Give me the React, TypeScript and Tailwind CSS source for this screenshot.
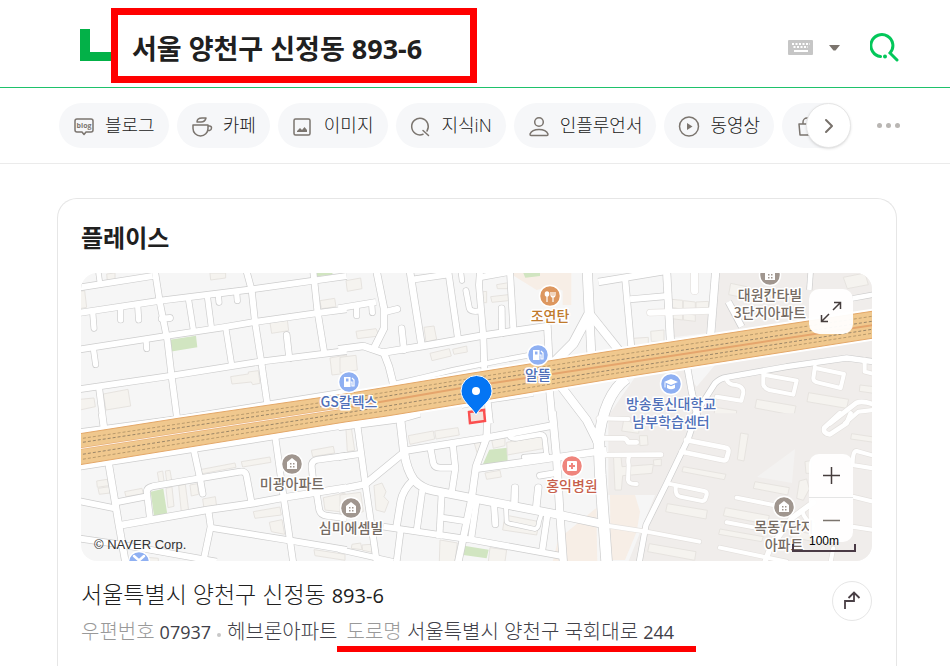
import React from 'react';
import { ChevronRight } from 'lucide-react';

type Road = [width: number, d: string];

interface Tile {
  x: number;
  y: number;
  roads: Road[];
  stubs: Road[];
  land?: string;
  buildings: string;
  parks?: string;
  food?: string;
}

interface Pin {
  x: number;
  y: number;
  kind: 'home' | 'gas' | 'food' | 'school' | 'hospital' | 'repair';
  lines: string[];
}

// Each tile is drawn at three units per map pixel.
const tiles: Tile[] = [
  {
    x: 80,
    y: 270,
    roads: [
      [18, 'M-5 53L218 18'],
      [18, 'M-5 129L240 92L500 60L700 32L800 18'],
      [18, 'M-5 239L245 200L430 172L530 155L720 128L800 118'],
      [18, 'M-5 358L270 318L540 275L800 243'],
      [18, 'M-5 487L300 446L800 366'],
      [18, 'M225 5L240 100L262 210L275 320L292 450'],
      [18, 'M500 5L515 60L525 155L543 270L562 402'],
      [18, 'M700 5L712 120L733 250'],
      [16, 'M325 85L341 185'],
      [16, 'M382 78L395 178'],
      [16, 'M437 172L455 285'],
      [14, 'M55 5L60 40'],
      [18, 'M57 352L72 470'],
    ],
    stubs: [
      [16, 'M38 125L42 175'],
      [16, 'M122 113V150'],
      [16, 'M173 105L176 150'],
      [18, 'M245 146L270 144'],
      [16, 'M415 75L417 97'],
      [16, 'M470 68L472 92'],
      [16, 'M40 235L47 284'],
      [16, 'M198 208L200 236'],
      [18, 'M620 195L628 265'],
    ],
    buildings:
      'M80 12L105 9V30L82 32ZM390 9H437V24L392 30ZM0 64L14 62L20 112L0 116ZM720 92L764 85L768 110L724 116ZM570 158L622 150L626 182L575 190ZM452 320L505 312V306L535 302L540 340L518 344L514 336L456 342ZM750 264L800 255V310L756 315ZM0 388L42 384L46 410L0 420ZM70 372L144 358L152 408L78 420Z',
    parks: 'M265 210L348 197L352 232L270 245ZM708 9H758L756 14L712 19Z',
  },
  {
    x: 340,
    y: 270,
    roads: [
      [18, 'M-5 115L108 96'],
      [20, 'M-5 238L70 228L128 248L250 228L420 198L625 168'],
      [18, 'M215 29L332 12'],
      [20, 'M110 5L132 115V175L102 235'],
      [20, 'M130 245L147 290L162 350'],
      [20, 'M210 5L245 228'],
      [18, 'M325 5L355 212'],
      [18, 'M420 5L417 45L430 200L433 300'],
      [18, 'M418 22L506 6'],
      [18, 'M510 5L521 190'],
      [14, 'M150 345L250 322L340 300L480 272L625 245'],
      [20, 'M622 165L628 280'],
      [28, 'M742 5L748 130L700 220L640 280'],
      [24, 'M748 130L755 270'],
      [24, 'M748 130L840 245'],
      [12, 'M365 408L440 393L580 372'],
      [18, 'M442 385L450 460'],
      [20, 'M628 355L637 450'],
      [24, 'M660 345L740 450L775 520'],
      [30, 'M860 325Q790 375 775 520'],
    ],
    stubs: [
      [16, 'M50 108V137'],
      [16, 'M95 102L97 128'],
      [18, 'M135 126L172 117'],
      [18, 'M185 175L192 240'],
      [18, 'M485 115L486 190'],
      [16, 'M378 62L388 115Q392 128 422 122'],
      [14, 'M363 8L366 32'],
    ],
    buildings:
      'M18 32L62 24L66 56L22 64ZM48 184L108 176L118 198L52 206ZM252 172L282 168L290 208L258 216ZM270 250L328 236L334 258L276 272ZM338 238L380 228L382 246L342 253ZM452 80L505 74V92L456 97ZM470 44L505 38V56H472ZM425 66L440 64V98H428ZM0 262L48 256L52 300L0 308Z',
    food: 'M508 9H694V105H668V62L635 48L590 60Z',
    parks: 'M550 9H600V18L556 23Z',
  },
  {
    x: 600,
    y: 270,
    land: 'M355 5H820V125L346 192ZM215 120L330 128L318 190L222 202ZM345 285L820 210V455H30V430L105 322L255 300L290 350Z',
    roads: [
      [20, 'M-5 36L190 4'],
      [18, 'M75 20L95 245'],
      [18, 'M90 88L202 78'],
      [22, 'M200 5L212 225'],
      [22, 'M347 5L332 195'],
      [18, 'M385 95L425 170'],
      [14, 'M632 5L628 60'],
      [14, 'M758 85L820 74'],
      [18, 'M262 292L275 365L295 450'],
      [16, 'M262 470L345 340Q360 325 380 322L560 290L740 264L820 275'],
    ],
    stubs: [
      [22, 'M284 -10V62'],
      [18, 'M150 128L330 122'],
      [12, 'M378 325Q385 345 408 345Q432 350 430 368L424 392L350 380'],
      [12, 'M490 305V345Q495 356 508 360L580 374L590 332L495 315'],
      [12, 'M645 290L640 325Q640 335 655 338L722 354L732 312L650 295'],
      [12, 'M794 270V305L822 312'],
      [14, 'M690 460L770 398Q790 392 820 403'],
      [12, 'M735 460L775 425L820 420'],
    ],
    buildings:
      'M214 88L248 91V118L214 112ZM250 92L286 96V120L250 118ZM288 96L326 94V118L288 120ZM214 126L248 130V150L214 146ZM250 130L286 135V154L250 150ZM100 205L145 202V222L102 227ZM152 184L192 180V214H154ZM392 40L440 50L436 84L386 74ZM470 388L588 408L582 436L465 414ZM626 368L746 388L740 415L621 395ZM780 345L822 350V370L778 364ZM730 22L795 9L805 44L742 56ZM345 412L410 422L408 450H340Z',
  },
  {
    x: 80,
    y: 415,
    roads: [
      [18, 'M-5 156L800 30'],
      [18, 'M65 -5L72 45'],
      [20, 'M85 140L115 320L137 445'],
      [18, 'M-5 258L105 280'],
      [18, 'M108 262L200 244'],
      [18, 'M210 310L201 235Q198 218 218 214L360 190L480 170Q495 168 499 180L515 265'],
      [18, 'M340 98L360 190'],
      [20, 'M115 332L380 285L520 265L610 248L800 218'],
      [18, 'M585 60L610 240L640 445'],
      [18, 'M385 285L392 335L370 440'],
      [18, 'M390 338L620 375L800 405'],
      [18, 'M704 240L695 155Q694 138 712 134L800 122'],
      [18, 'M710 235L718 285Q722 300 740 302L800 310'],
      [18, 'M-5 370L130 390L410 440'],
    ],
    stubs: [[18, 'M360 190L368 236']],
    buildings:
      'M50 198L82 193L86 212L52 217ZM54 220L88 215L90 234L58 238ZM232 172L248 168L252 198L237 201ZM256 168L270 166L275 195L260 198ZM134 230L186 220L190 236L138 245ZM258 220L276 216L282 274L264 278ZM296 212L316 208L326 286L304 291ZM330 210L352 206L356 238L334 243ZM355 165L465 144L468 157L358 178ZM484 140L570 126L573 142L488 156ZM368 252L406 245L410 274L372 280ZM694 106L760 94L764 114L698 125ZM520 290L600 276L604 300L525 310ZM568 322L606 314L614 358L574 350ZM730 248L795 234V292L735 285ZM702 404L795 418V436L705 422ZM175 425L235 430V440H170Z',
    parks: 'M212 230L250 221L262 298L222 302Z',
  },
  {
    x: 340,
    y: 415,
    roads: [
      [20, 'M-5 36L180 12L240 -5'],
      [18, 'M52 30L75 200L110 440'],
      [18, 'M-5 126L65 116'],
      [20, 'M-5 224L75 208L192 112'],
      [24, 'M180 5L192 110Q200 165 222 195Q245 220 280 227L400 250L660 300L780 325'],
      [20, 'M190 108L430 70L645 30'],
      [20, 'M443 -10L440 68L408 155L395 250L355 440'],
      [20, 'M405 162L645 128L800 106'],
      [22, 'M637 -10L650 130L660 300L670 440'],
      [18, 'M270 92L280 145Q284 158 300 158L345 158'],
      [18, 'M338 85L346 160L334 240'],
      [20, 'M220 195Q188 225 182 260L168 345'],
      [18, 'M247 225L230 348'],
      [18, 'M305 235L298 370'],
      [18, 'M305 308L372 318'],
      [18, 'M410 255L393 375'],
      [18, 'M130 335L400 375L675 425'],
      [18, 'M622 300L605 418'],
      [18, 'M182 345L170 440'],
      [16, 'M-5 403L160 440'],
      [32, 'M775 40L781 180L800 440'],
    ],
    stubs: [
      [14, 'M510 65Q515 72 530 70L600 58Q612 58 614 70L620 125'],
      [14, 'M552 126L620 120'],
      [18, 'M600 182L648 174'],
      [20, 'M525 218L523 275'],
      [20, 'M595 218L588 285'],
      [18, 'M462 268L466 328'],
      [12, 'M498 278L500 320Q502 325 520 328L585 342Q596 340 597 320L605 295'],
    ],
    buildings:
      'M205 62L280 48L284 72L210 88ZM284 48L354 38L358 60L288 72ZM18 42L34 38L44 106L22 110ZM455 74L495 68V92L460 100ZM500 82L606 65L614 100L502 120ZM435 174L480 166L484 186L440 193ZM102 212L126 204L138 230L132 245L146 260L134 292L108 285ZM495 300L598 320L590 360L488 345ZM36 388L62 384L66 404L34 400ZM66 390L94 388L98 412L68 406ZM300 375L352 384L345 440H298ZM0 240L62 232L70 290L0 305ZM450 398L500 405L495 440H445ZM402 82L425 78L415 125Z',
    parks: 'M448 104L502 98L503 145L425 156ZM372 392L446 404L440 430L370 420Z',
    food: 'M770 278V340L772 440H638L655 372L700 335Z',
  },
  {
    x: 600,
    y: 415,
    land: 'M25 -5H820V440H85L165 240H25Z',
    roads: [[16, 'M285 10L265 70L200 205L138 330L118 440']],
    stubs: [
      [12, 'M-5 10L85 12'],
      [14, 'M0 70H70Q80 70 84 82H110'],
      [14, 'M10 120L183 119'],
      [12, 'M90 120Q82 130 86 150L84 195Q86 208 110 207'],
      [14, 'M258 75L375 98Q388 100 385 112L380 130Q378 138 365 135L245 110'],
      [12, 'M205 206L312 228Q322 230 320 240L316 252Q312 260 300 257L240 245Q225 242 227 215'],
      [12, 'M22 332L140 350L298 380'],
      [12, 'M410 248L520 270'],
      [12, 'M380 322L465 338'],
      [12, 'M360 398L560 440'],
      [16, 'M495 440L510 400L575 310L640 262'],
      [14, 'M752 -5L740 25L690 58Q668 56 673 38L720 -5'],
      [12, 'M820 122L770 108Q758 106 758 150L820 160'],
      [12, 'M608 292Q615 315 640 330'],
      [12, 'M758 245L820 260'],
      [12, 'M700 400L692 440'],
      [12, 'M758 335L820 345'],
    ],
    buildings:
      'M422 54L445 58L432 138L412 134ZM250 155L378 178L373 194L246 170ZM465 200L568 218L563 240L460 220ZM202 266L322 286L318 312L197 290ZM376 278L508 302L502 328L370 302ZM360 342L490 365L485 380L356 358ZM148 386L288 410L284 436L143 410ZM40 115H62L66 155L160 148L156 175L68 182L64 225H45ZM118 62H142L144 90L120 92ZM72 10L118 35L116 55L65 48ZM755 56L822 66V82L752 72ZM598 198L620 192L628 222L610 256L590 250ZM160 135L184 132V152H162ZM575 345L640 358V380L570 365ZM615 140L635 136V175H618Z',
    food: 'M30 240L105 240L120 290L110 350L75 435H32Z',
  },
];

const pins: Pin[] = [
  { x: 550, y: 296, kind: 'food', lines: ['조연탄'] },
  { x: 538, y: 355, kind: 'gas', lines: ['알뜰'] },
  { x: 349, y: 382, kind: 'gas', lines: ['GS칼텍스'] },
  { x: 770, y: 275, kind: 'home', lines: ['대원칸타빌', '3단지아파트'] },
  { x: 671, y: 384, kind: 'school', lines: ['방송통신대학교', '남부학습센터'] },
  { x: 292, y: 464, kind: 'home', lines: ['미광아파트'] },
  { x: 351, y: 508, kind: 'home', lines: ['심미에셈빌'] },
  { x: 572, y: 466, kind: 'hospital', lines: ['홍익병원'] },
  { x: 784, y: 507, kind: 'home', lines: ['목동7단지', '아파트'] },
  { x: 139, y: 562, kind: 'repair', lines: [] },
];

const pinColors = {
  home: { fill: '#a0968f', text: '#756b63' },
  gas: { fill: '#8fb0f2', text: '#4f70b8' },
  food: { fill: '#dd975f', text: '#c07a2c' },
  school: { fill: '#8fb0f2', text: '#4f70b8' },
  hospital: { fill: '#ef857d', text: '#c75f4c' },
  repair: { fill: '#8fb0f2', text: '#4f70b8' },
};

const PinGlyph = ({ kind }: { kind: Pin['kind'] }) => {
  switch (kind) {
    case 'home':
      return (
        <>
          <path d="M-5 -2L0 -6L5 -2V5H-5Z" fill="#fff" />
          <path d="M-2 -1h1.500v1.500H-2zM1 -1h1.500v1.500H1zM-2 2h1.500v1.500H-2zM1 2h1.500v1.500H1z" fill="#a0968f" />
        </>
      );
    case 'gas':
      return (
        <>
          <path d="M-5 -5H1.500V5H-5Z" fill="#fff" />
          <path d="M-3 -3.500H-0.500V-0.500H-3Z" fill="#8fb0f2" />
          <path d="M1.500 0H3V4H5V-2L3 -4" fill="none" stroke="#fff" strokeWidth="1.200" />
        </>
      );
    case 'food':
      return (
        <>
          <ellipse cx="-3" cy="-2" rx="2.300" ry="2.700" fill="#fff" />
          <path d="M-3 0V6M3 0V6M1 -4V-1Q1 1 3 1Q5 1 5 -1V-4M3 -4V1" fill="none" stroke="#fff" strokeWidth="1.200" />
        </>
      );
    case 'school':
      return (
        <path d="M-7 -2L0 -5L7 -2L0 1ZM-4 0.500L0 2.300L4 0.500V4Q0 6.500 -4 4ZM-6.500 -1.500V3.500H-5.500V-1Z" fill="#fff" />
      );
    case 'hospital':
      return (
        <>
          <rect x="-5" y="-5" width="10" height="10" rx="1" fill="#fff" />
          <path d="M-3 0H3M0 -3V3" stroke="#ef857d" strokeWidth="2" />
        </>
      );
    case 'repair':
      return <path d="M-5 -6L5 3M5 -6L-5 3" stroke="#fff" strokeWidth="2.500" strokeLinecap="round" />;
  }
};

const HIGHWAY =
  'M78 434L180 418L345 394L473 373L605 352L874 311V338L605 380L473 402L387 416L345 422L78 465Z';

const StreetMap = () => (
  <svg
    className="block h-full w-full font-['Noto_Sans_CJK_KR',sans-serif]"
    viewBox="81 273 791 288"
    preserveAspectRatio="xMidYMid slice"
    role="img"
    aria-label="지도"
  >
    <rect x="0" y="200" width="1000" height="450" fill="#f6f6f6" />
    {tiles.map((t) => (
      <g key={`land-${t.x}-${t.y}`} transform={`translate(${t.x} ${t.y}) scale(0.3333)`}>
        {t.land && <path d={t.land} fill="#f0edeb" />}
        {t.food && <path d={t.food} fill="#f7eee6" />}
        {t.parks && <path d={t.parks} fill="#d1e5c1" />}
        <path d={t.buildings} fill="#f5f3ef" stroke="#e6e3df" strokeWidth="3" />
      </g>
    ))}
    <path d="M795 449L792 483L757 477Z" fill="#f3f2f1" />
    {tiles.map((t) => (
      <g key={`case-${t.x}-${t.y}`} transform={`translate(${t.x} ${t.y}) scale(0.3333)`} fill="none" stroke="#cdcdcd" strokeLinejoin="round">
        {t.roads.map(([w, d]) => (
          <path key={d} d={d} strokeWidth={w + 4} />
        ))}
        {t.stubs.map(([w, d]) => (
          <path key={d} d={d} strokeWidth={w + 4} strokeLinecap="round" stroke={t.x === 600 ? '#e4e1de' : '#cdcdcd'} />
        ))}
      </g>
    ))}
    <path d={HIGHWAY} fill="#fff" stroke="#fff" strokeWidth="5" />
    {tiles.map((t) => (
      <g key={`road-${t.x}-${t.y}`} transform={`translate(${t.x} ${t.y}) scale(0.3333)`} fill="none" stroke="#fff" strokeLinejoin="round">
        {t.roads.map(([w, d]) => (
          <path key={d} d={d} strokeWidth={w} />
        ))}
        {t.stubs.map(([w, d]) => (
          <path key={d} d={d} strokeWidth={w} strokeLinecap="round" />
        ))}
      </g>
    ))}

    <path d={HIGHWAY} fill="#f0c88e" stroke="#e3a768" strokeWidth="1" />
    <g fill="none" stroke="#b99a6c" strokeWidth="1" strokeDasharray="3 2">
      <path d="M78 439L345 399L473 378L605 357L874 316" />
      <path d="M78 443L345 403L473 382L605 362L874 321" stroke="#9a8567" />
      <path d="M78 455L345 413L473 392L605 371L874 329" stroke="#9a8567" />
      <path d="M78 460L345 417L473 397L605 375L874 333" />
    </g>
    <path d="M78 449L345 408L473 386L605 366L874 325" fill="none" stroke="#e5a56c" strokeWidth="2" />
    <path d="M78 449L345 408" fill="none" stroke="#fdf3e6" strokeWidth="1" />

    <path d="M469 412L484 410L485 421L470 423Z" fill="#f3e3dd" stroke="#fb4f4f" strokeWidth="2.500" />
    {pins.map((pin) => (
      <g key={`${pin.x}-${pin.y}`}>
        <g transform={`translate(${pin.x} ${pin.y})`}>
          <circle r="10.500" fill={pinColors[pin.kind].fill} stroke="#fff" strokeWidth="1.500" />
          <PinGlyph kind={pin.kind} />
        </g>
        <text
          textAnchor="middle"
          fontSize="14"
          fontWeight="500"
          fill={pinColors[pin.kind].text}
          stroke="#fff"
          strokeWidth="3"
          strokeLinejoin="round"
          paintOrder="stroke"
        >
          {pin.lines.map((line, i) => (
            <tspan key={line} x={pin.x} y={pin.y + 25 + i * 18}>
              {line}
            </tspan>
          ))}
        </text>
      </g>
    ))}
    <path d="M476 415C472 407 461 401 461 391A15.500 15.500 0 0 1 492 391C492 401 480 407 476 415Z" fill="#0475f4" stroke="#fff" strokeWidth="1" />
    <circle cx="476" cy="391" r="4" fill="#fff" />
  </svg>
);

const iconProps = {
  width: 22,
  height: 22,
  viewBox: '0 0 22 22',
  fill: 'none',
  stroke: '#7b756f',
  strokeWidth: 1.5,
  strokeLinecap: 'round',
  strokeLinejoin: 'round',
  'aria-hidden': true,
} as const;

const tabs = [
  {
    label: '블로그',
    icon: (
      <svg {...iconProps}>
        <path d="M4 4H18Q20 4 20 6V15Q20 17 18 17H13L11 19.500L9 17H4Q2 17 2 15V6Q2 4 4 4Z" />
        <text x="11" y="13" textAnchor="middle" fontSize="7" fontWeight="700" fill="#7b756f" stroke="none">blog</text>
      </svg>
    ),
  },
  {
    label: '카페',
    icon: (
      <svg {...iconProps}>
        <path d="M2 10H17V13.500A7 7 0 0 1 2 13.500ZM17 11H18.500Q20.500 11 20.500 13T18.500 15.500H16.500M6 7Q6 3 11 3H15Q14 7 10 7Z" />
      </svg>
    ),
  },
  {
    label: '이미지',
    icon: (
      <svg {...iconProps}>
        <rect x="2" y="4" width="16" height="16" rx="1.500" />
        <path d="M5 17V16L8 13L10 15L12.500 12L15 15V17Z" fill="#7b756f" stroke="none" />
      </svg>
    ),
  },
  {
    label: '지식iN',
    icon: (
      <svg {...iconProps}>
        <path d="M13 19.300A8.300 8.300 0 1 1 17 16M13 15.500L18.500 20.500" />
      </svg>
    ),
  },
  {
    label: '인플루언서',
    icon: (
      <svg {...iconProps}>
        <circle cx="11" cy="7" r="4.300" />
        <path d="M3 20.500Q2 20.500 2 19Q4 14.500 11 14.500T20 19Q20 20.500 19 20.500Z" />
      </svg>
    ),
  },
  {
    label: '동영상',
    icon: (
      <svg {...iconProps}>
        <circle cx="11" cy="11.500" r="9.500" />
        <path d="M9 8V15L14.500 11.500Z" fill="#7b756f" stroke="none" />
      </svg>
    ),
  },
];

const Header = () => (
  <header className="flex h-22 shrink-0 items-center border-b border-[#1ec26b] pr-[51px] pl-20">
    <a href="#" aria-label="NAVER" className="mt-[3px] shrink-0">
      <svg width="31" height="32" viewBox="0 0 31 32" className="block" aria-hidden="true">
        <path d="M0 0H10V23H31V32H0Z" fill="#03b148" />
      </svg>
    </a>
    <form className="flex min-w-0 flex-1 items-center justify-between" onSubmit={(e) => e.preventDefault()}>
      <input
        type="text"
        aria-label="검색어"
        defaultValue="서울 양천구 신정동 893-6"
        className="mt-1 h-[75px] w-[366px] border-[7px] border-[#ff0000] bg-white px-[14px] pt-[3px] text-[27px] font-bold text-[#202020] outline-none"
      />
      <div className="mt-[8px] flex items-center">
        <button type="button" aria-label="한글 입력기" className="mr-4">
          <svg width="25" height="15" viewBox="0 0 25 15" className="block">
            <rect width="25" height="15" rx="1" fill="#c6c6c6" />
            <path d="M4 4H22M5.500 7H20" stroke="#fff" strokeWidth="2" strokeDasharray="2 1.500" />
            <path d="M6 11H20" stroke="#fff" strokeWidth="2" />
          </svg>
        </button>
        <button type="button" aria-label="자동완성 펼치기" className="mr-[30px]">
          <svg width="11" height="6" viewBox="0 0 11 6" className="block">
            <path d="M0 0H11L6.500 5.500H4.500Z" fill="#7b746d" />
          </svg>
        </button>
        <button type="submit" aria-label="검색">
          <svg width="29" height="30" viewBox="0 0 29 30" className="block" fill="none" stroke="#03c75a" strokeWidth="3" strokeLinecap="round">
            <path d="M10.500 23.500A11 11 0 1 1 20 20L27 27" />
            <circle cx="15" cy="23.500" r="2" fill="#03c75a" stroke="none" />
          </svg>
        </button>
      </div>
    </form>
  </header>
);

const TabBar = () => (
  <nav className="flex h-19 shrink-0 items-center border-b border-[#ebebeb] pr-[50px] pl-[59px]">
    <div className="relative min-w-0 max-w-[792px] flex-1">
      <ul className="mr-[22px] flex gap-2 overflow-hidden">
        {tabs.map((tab) => (
          <li key={tab.label} className="shrink-0">
            <a
              href="#"
              className="flex h-[45px] items-center gap-[10px] rounded-full bg-[#f6f7f9] px-[14px] text-[18px] font-light text-[#202020]"
            >
              {tab.icon}
              {tab.label}
            </a>
          </li>
        ))}
        <li className="shrink-0">
          <a href="#" aria-label="쇼핑" className="flex h-[45px] w-24 items-center rounded-full bg-[#f6f7f9] px-[14px]">
            <svg {...iconProps}>
              <path d="M3 9H19L18 20H4ZM7 9V7A4 4 0 0 1 15 7V9" />
            </svg>
          </a>
        </li>
      </ul>
      <button
        type="button"
        aria-label="다음"
        className="absolute top-0 right-0 flex h-[45px] w-[45px] items-center justify-center rounded-full border border-[#e6e6e6] bg-white text-[#77716b] shadow-sm"
      >
        <ChevronRight size={24} strokeWidth={2} />
      </button>
    </div>
    <button type="button" aria-label="더보기" className="ml-[26px] flex gap-1">
      <span className="h-[5px] w-[5px] rounded-full bg-[#b9b6b3]" />
      <span className="h-[5px] w-[5px] rounded-full bg-[#b9b6b3]" />
      <span className="h-[5px] w-[5px] rounded-full bg-[#b9b6b3]" />
    </button>
  </nav>
);

const PlaceMap = () => (
  <div className="relative h-72 overflow-hidden rounded-[16px]">
    <StreetMap />
    <button
      type="button"
      aria-label="지도 크게 보기"
      className="absolute top-4 right-[19px] flex h-[45px] w-[44px] items-center justify-center rounded-[10px] bg-white/95"
    >
      <svg width="22" height="22" viewBox="0 0 22 22" fill="none" stroke="#453d3d" strokeWidth="1.500">
        <path d="M13 9L20.500 1.500M14 1.500H20.500V8M9 13L1.500 20.500M1.500 14V20.500H8" />
      </svg>
    </button>
    <div className="absolute right-[19px] bottom-[19px] w-[44px] overflow-hidden rounded-[10px] bg-white/95">
      <button type="button" aria-label="확대" className="flex h-[44px] w-full items-center justify-center border-b border-[#e5e5e5]">
        <svg width="17" height="17" viewBox="0 0 17 17" stroke="#453d3d" strokeWidth="1.500">
          <path d="M8.500 0V17M0 8.500H17" />
        </svg>
      </button>
      <button type="button" aria-label="축소" className="flex h-[44px] w-full items-center justify-center">
        <svg width="17" height="17" viewBox="0 0 17 17" stroke="#7b746d" strokeWidth="1.500">
          <path d="M0 8.500H17" />
        </svg>
      </button>
    </div>
    <span className="absolute bottom-[6px] left-[13px] font-['Liberation_Sans',sans-serif] text-[13px] leading-5 text-[#333]">
      © NAVER Corp.
    </span>
    <div className="absolute right-4 bottom-[9px] w-16 pb-[3px] text-center font-['Liberation_Sans',sans-serif] text-xs text-black">
      100m
      <div className="absolute inset-x-0 bottom-0 h-2 border-x-2 border-b-2 border-[#4a3a45]" />
    </div>
  </div>
);

const PlaceCard = () => (
  <section className="mt-[34px] mr-[53px] ml-[57px] flex-1 rounded-t-[20px] border border-b-0 border-[#e6e6e6] pr-6 pl-[23px]">
    <h2 className="mt-[21px] mb-[17px] text-[24px] leading-9 font-bold text-[#202020]">플레이스</h2>
    <PlaceMap />
    <div className="mt-[15px] flex justify-between">
      <div>
        <h3 className="text-[23px] leading-9 font-light text-[#202020]">
          서울특별시 양천구 신정동 <span className="text-[20px] font-normal">893-6</span>
        </h3>
        <p className="mt-1 flex items-baseline text-[20px] leading-7 font-light text-[#404048]">
          <span className="mr-[5px] text-[#999]">우편번호</span>
          <span className="text-[18px] font-normal">07937</span>
          <span className="mx-[6px] h-1 w-1 self-center rounded-full bg-[#c8c8c8]" />
          <span>헤브론아파트</span>
          <span className="border-b-[6px] border-[#ff0000] pr-[22px] pl-[9px]">
            <span className="text-[#999]">도로명</span> 서울특별시 양천구 국회대로{' '}
            <span className="text-[18px] font-normal">244</span>
          </span>
        </p>
      </div>
      <a
        href="#"
        aria-label="길찾기"
        className="mt-[5px] flex h-10 w-10 shrink-0 items-center justify-center rounded-full border border-[#e6e6e6]"
      >
        <svg width="18" height="20" viewBox="0 0 18 20" fill="none" stroke="#4a4046" strokeWidth="1.800">
          <path d="M2 18V10H11V2M5.500 7L11 1.500L16.500 7" />
        </svg>
      </a>
    </div>
  </section>
);

export default function App() {
  return (
    <div
      lang="ko"
      className="flex h-screen flex-col overflow-hidden bg-white font-['Open_Sans','Noto_Sans_CJK_KR',sans-serif]"
    >
      <Header />
      <TabBar />
      <main className="flex flex-1 flex-col">
        <PlaceCard />
      </main>
    </div>
  );
}
